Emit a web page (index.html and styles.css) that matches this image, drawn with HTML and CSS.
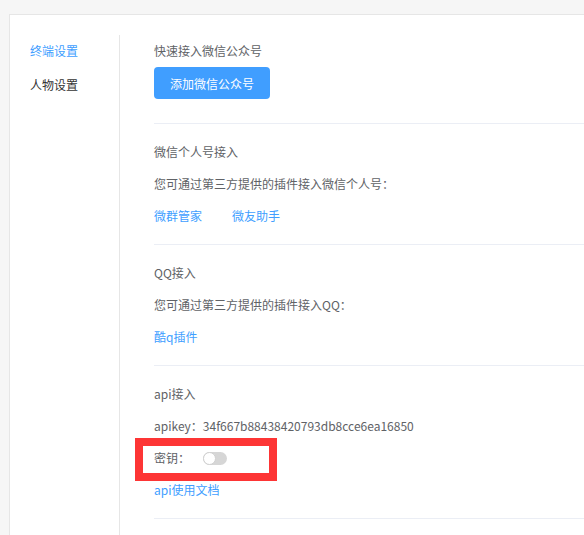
FILE: index.html
```html
<!DOCTYPE html>
<html lang="zh-CN">
<head>
<meta charset="utf-8">
<title>终端设置</title>
<link rel="stylesheet" href="styles.css">
</head>
<body>
<div class="card">
  <aside class="sidebar">
    <div class="nav-item active">终端设置</div>
    <div class="nav-item">人物设置</div>
  </aside>
  <main class="content">
    <section class="section first">
      <div class="row title">快速接入微信公众号</div>
      <button class="btn-primary">添加微信公众号</button>
    </section>
    <section class="section">
      <div class="row title">微信个人号接入</div>
      <div class="row">您可通过第三方提供的插件接入微信个人号：</div>
      <div class="row links"><a class="link">微群管家</a><a class="link">微友助手</a></div>
    </section>
    <section class="section">
      <div class="row title">QQ接入</div>
      <div class="row">您可通过第三方提供的插件接入QQ：</div>
      <div class="row links"><a class="link">酷q插件</a></div>
    </section>
    <section class="section">
      <div class="row title">api接入</div>
      <div class="row">apikey：34f667b88438420793db8cce6ea16850</div>
      <div class="row secret">
        <span>密钥：</span>
        <span class="switch"><span class="knob"></span></span>
        <span class="highlight"></span>
      </div>
      <div class="row links"><a class="link">api使用文档</a></div>
    </section>
  </main>
</div>
</body>
</html>
```

FILE: styles.css
```css
html, body {
  margin: 0;
  padding: 0;
}
body {
  background: #f6f6f6;
  font-family: "Microsoft YaHei", "Noto Sans CJK SC", "Liberation Sans", sans-serif;
  font-size: 12px;
  color: #606266;
  width: 584px;
  height: 535px;
  overflow: hidden;
}
.card {
  margin: 14px 0 0 9px;
  height: 521px;
  background: #fff;
  border-top: 1px solid #e6e6e6;
  border-left: 1px solid #e6e6e6;
  box-sizing: border-box;
  padding-top: 20px;
  display: flex;
  overflow: hidden;
}
.sidebar {
  width: 110px;
  flex: none;
  border-right: 1px solid #e6e6e6;
  padding-left: 20px;
  box-sizing: border-box;
}
.nav-item {
  line-height: 32px;
  height: 32px;
  margin-bottom: 2px;
  color: #333;
}
.nav-item.active {
  color: #409eff;
}
.content {
  flex: 1;
  min-width: 0;
  padding-left: 34px;
}
.section {
  padding: 12px 0;
  border-bottom: 1px solid #ebeef5;
}
.section.first {
  padding: 0 0 24px;
}
.row {
  height: 32px;
  line-height: 32px;
  white-space: nowrap;
}
.btn-primary {
  display: block;
  height: 32px;
  padding: 0 16px;
  border: none;
  border-radius: 4px;
  background: #409eff;
  color: #fff;
  font-family: inherit;
  font-size: 12px;
  margin: 0;
}
.links .link {
  color: #409eff;
  margin-right: 30px;
  text-decoration: none;
}
.secret {
  position: relative;
  display: flex;
  align-items: center;
}
.switch {
  display: inline-block;
  position: relative;
  width: 24px;
  height: 13px;
  border-radius: 7px;
  background: #d6d6d6;
  margin-left: 13px;
}
.knob {
  position: absolute;
  left: 0;
  top: 0;
  width: 13px;
  height: 13px;
  border-radius: 50%;
  background: #fff;
  border: 1px solid #d0d0d0;
  box-sizing: border-box;
}
.highlight {
  position: absolute;
  left: -19px;
  top: -4px;
  width: 142px;
  height: 43px;
  border: 8px solid #fd3535;
  box-sizing: border-box;
}
```
